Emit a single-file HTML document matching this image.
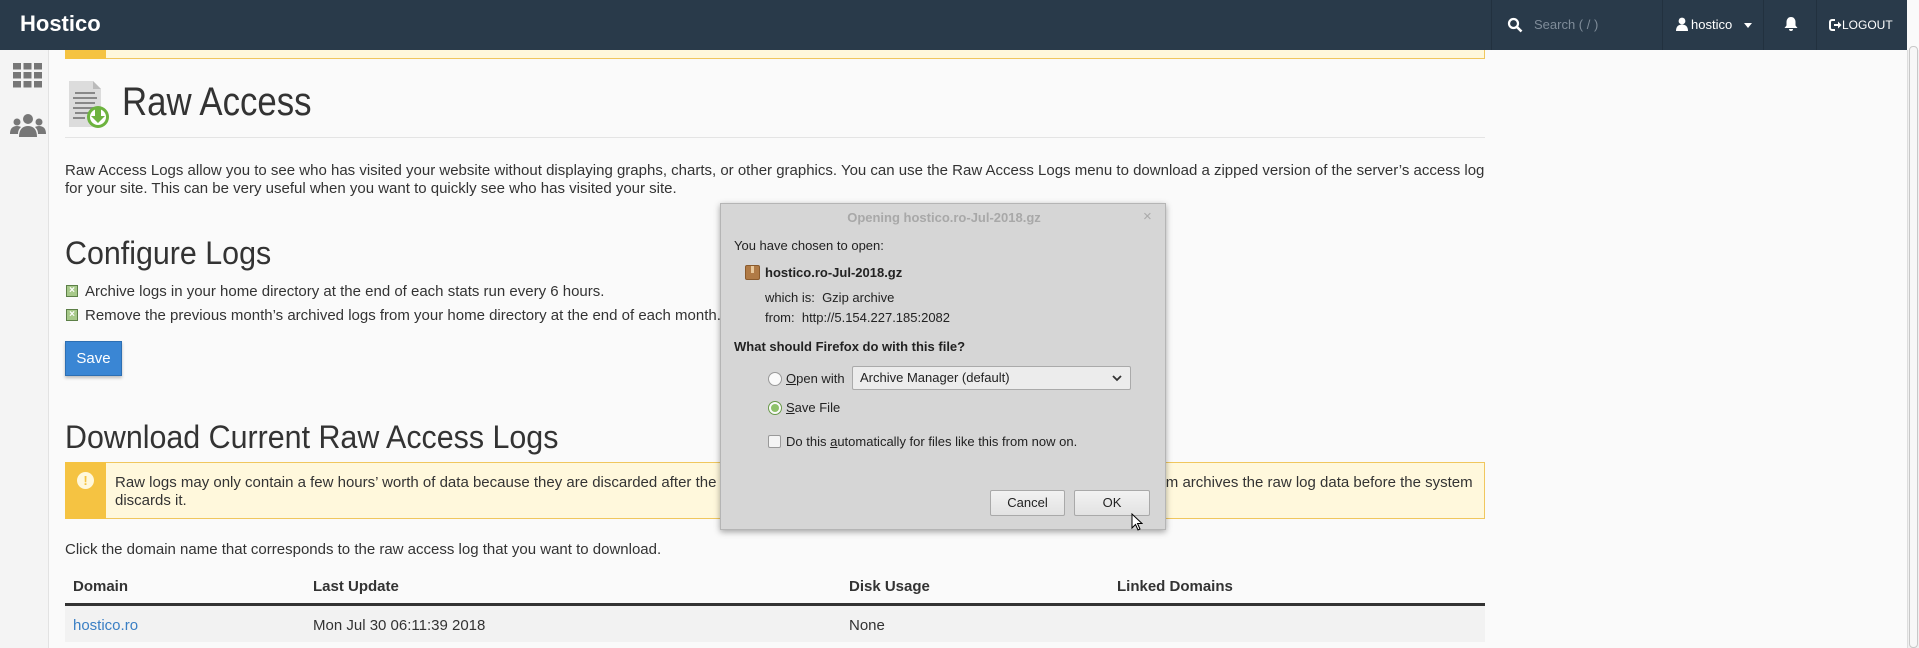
<!DOCTYPE html>
<html><head><meta charset="utf-8"><style>
*{margin:0;padding:0;box-sizing:border-box}
body{width:1919px;height:648px;overflow:hidden;background:#fafafa;font-family:"Liberation Sans",sans-serif;color:#333;position:relative}
.a{position:absolute;white-space:nowrap}
.hdr{left:0;top:0;width:1907px;height:50px;background:#293a4a}
.sep{top:0;width:1px;height:50px;background:#22313f}
.side{left:0;top:50px;width:49px;height:598px;background:#f4f4f4;border-right:1px solid #e2e2e2}
.t15{font-size:15px;color:#333}
.sx{transform-origin:0 0}
.dlg{left:720px;top:203px;width:446px;height:327px;background:#d6d6d6;border:1px solid #b5b5b5;box-shadow:0 2px 6px rgba(0,0,0,.35);font-size:13px;color:#222}
.dlg .a{position:absolute}
.btn{background:linear-gradient(#f2f2f2,#e2e2e2);border:1px solid #a9a9a9;border-radius:2px;text-align:center;line-height:24px}
.cb{width:12px;height:12px;background:#a7c98a;border:1px solid #5c7f47;color:#fff;font-size:10px;line-height:10px;text-align:center;font-weight:bold}
</style></head><body>
<div class="a hdr"></div>
<div class="a" style="left:20px;top:11px;font-size:22px;font-weight:bold;color:#fff">Hostico</div>
<div class="a sep" style="left:1491px"></div><div class="a sep" style="left:1662px"></div><div class="a sep" style="left:1763px"></div><div class="a sep" style="left:1816px"></div>
<svg class="a" style="left:1507px;top:17px" width="16" height="16" viewBox="0 0 16 16"><circle cx="6.5" cy="6.5" r="4.5" fill="none" stroke="#fff" stroke-width="2.2"/><path d="M10 10l4.5 4.5" stroke="#fff" stroke-width="2.6"/></svg>
<div class="a" style="left:1534px;top:17px;font-size:13px;color:#7f8c99">Search ( / )</div>
<svg class="a" style="left:1676px;top:17px" width="12" height="14" viewBox="0 0 12 14"><circle cx="6" cy="4" r="3.4" fill="#fff"/><path d="M0 14c0-5 3-6.5 6-6.5s6 1.5 6 6.5z" fill="#fff"/></svg>
<div class="a" style="left:1691px;top:17px;font-size:13px;color:#fff">hostico</div>
<div class="a" style="left:1744px;top:23px;border:4px solid transparent;border-top:5px solid #fff"></div>
<svg class="a" style="left:1784px;top:16px" width="14" height="16" viewBox="0 0 14 16"><path d="M7 1c3 0 4.5 2.5 4.5 5v3.5L13.5 12H.5l2-2.5V6C2.5 3.5 4 1 7 1z M5 13h4a2 2 0 0 1-4 0z" fill="#fff"/></svg>
<svg class="a" style="left:1829px;top:19px" width="13" height="12" viewBox="0 0 13 12"><path d="M6 1H3a2 2 0 0 0-2 2v6a2 2 0 0 0 2 2h3" fill="none" stroke="#fff" stroke-width="2"/><path d="M5 5h4V2.5L12.5 6 9 9.5V7H5z" fill="#fff"/></svg>
<div class="a" style="left:1842px;top:18px;font-size:12px;color:#fff">LOGOUT</div>
<div class="a" style="left:1907px;top:50px;width:12px;height:598px;background:#f0f0f0;border-left:1px solid #ddd"></div>
<div class="a" style="left:1909px;top:46px;width:9px;height:602px;border:1px solid #c8c8c8;border-radius:4px;background:#f7f7f7"></div>
<div class="a side"></div>
<svg class="a" style="left:13px;top:63px" width="30" height="25" viewBox="0 0 30 25"><g fill="#777"><rect x="0" y="0" width="8" height="6.5"/><rect x="10.5" y="0" width="8" height="6.5"/><rect x="21" y="0" width="8" height="6.5"/><rect x="0" y="9" width="8" height="6.5"/><rect x="10.5" y="9" width="8" height="6.5"/><rect x="21" y="9" width="8" height="6.5"/><rect x="0" y="18" width="8" height="6.5"/><rect x="10.5" y="18" width="8" height="6.5"/><rect x="21" y="18" width="8" height="6.5"/></g></svg>
<svg class="a" style="left:10px;top:113px" width="36" height="24" viewBox="0 0 36 24"><g fill="#777"><circle cx="18" cy="6" r="5"/><path d="M9 24c0-8 4-11 9-11s9 3 9 11z"/><circle cx="7" cy="9" r="3.5"/><path d="M0 21c0-6 3-8 7-8 2 0 3 .5 4 1-2 2-3 4-3 7z"/><circle cx="29" cy="9" r="3.5"/><path d="M36 21c0-6-3-8-7-8-2 0-3 .5-4 1 2 2 3 4 3 7z"/></g></svg>
<div class="a" style="left:65px;top:50px;width:1420px;height:9px;background:#fff8dc;border:1px solid #f0c75e;border-top:none"></div>
<div class="a" style="left:65px;top:50px;width:41px;height:9px;background:#f5c342"></div>
<svg class="a" style="left:67px;top:81px" width="44" height="48" viewBox="0 0 44 48"><path d="M2 0h24l8 8v38H2z" fill="#dcdcdc"/><path d="M26 0v8h8z" fill="#bbb"/><g stroke="#888" stroke-width="2"><path d="M8 12h20M6 17h24M8 22h20M6 27h22M8 32h14M6 37h12"/></g><circle cx="31" cy="36" r="11" fill="#6db33f"/><circle cx="31" cy="36" r="8" fill="#fff"/><path d="M28 28h6v7h4l-7 7-7-7h4z" fill="#6db33f"/></svg>
<div class="a sx" style="left:122px;top:80px;font-size:40px;color:#333;transform:scaleX(0.87)">Raw Access</div>
<div class="a" style="left:65px;top:137px;width:1420px;height:1px;background:#e4e4e4"></div>
<div class="a t15" style="left:65px;top:162px">Raw Access Logs allow you to see who has visited your website without displaying graphs, charts, or other graphics. You can use the Raw Access Logs menu to download a zipped version of the server’s access log</div>
<div class="a t15" style="left:65px;top:180px">for your site. This can be very useful when you want to quickly see who has visited your site.</div>
<div class="a sx" style="left:65px;top:235px;font-size:32px;transform:scaleX(0.95)">Configure Logs</div>
<div class="a cb" style="left:66px;top:285px">×</div>
<div class="a t15" style="left:85px;top:283px">Archive logs in your home directory at the end of each stats run every 6 hours.</div>
<div class="a cb" style="left:66px;top:309px">×</div>
<div class="a t15" style="left:85px;top:307px">Remove the previous month’s archived logs from your home directory at the end of each month.</div>
<div class="a" style="left:65px;top:341px;width:57px;height:35px;background:#3a86d4;border:1px solid #2d6fb3;box-shadow:0 2px 3px rgba(0,0,0,.25);color:#fff;font-size:15px;text-align:center;line-height:33px">Save</div>
<div class="a sx" style="left:65px;top:419px;font-size:32px;transform:scaleX(0.95)">Download Current Raw Access Logs</div>
<div class="a" style="left:65px;top:462px;width:1420px;height:57px;background:#fff8dc;border:1px solid #f0c75e"></div>
<div class="a" style="left:65px;top:462px;width:41px;height:57px;background:#f5c342"></div>
<div class="a" style="left:77px;top:472px;width:17px;height:17px;border-radius:50%;background:#fff8dc;color:#f5c342;font-weight:bold;font-size:13px;text-align:center;line-height:17px">!</div>
<div class="a t15" style="left:115px;top:474px">Raw logs may only contain a few hours’ worth of data because they are discarded after the system processes them. However, if archiving is enabled, the system archives the raw log data before the system</div>
<div class="a t15" style="left:115px;top:492px">discards it.</div>
<div class="a t15" style="left:65px;top:541px">Click the domain name that corresponds to the raw access log that you want to download.</div>
<div class="a t15" style="left:73px;top:578px;font-weight:bold">Domain</div>
<div class="a t15" style="left:313px;top:578px;font-weight:bold">Last Update</div>
<div class="a t15" style="left:849px;top:578px;font-weight:bold">Disk Usage</div>
<div class="a t15" style="left:1117px;top:578px;font-weight:bold">Linked Domains</div>
<div class="a" style="left:65px;top:603px;width:1420px;height:3px;background:#333"></div>
<div class="a" style="left:65px;top:606px;width:1420px;height:36px;background:#f2f2f2"></div>
<div class="a t15" style="left:73px;top:617px;color:#3a7fc4">hostico.ro</div>
<div class="a t15" style="left:313px;top:617px">Mon Jul 30 06:11:39 2018</div>
<div class="a t15" style="left:849px;top:617px">None</div>
<div class="a dlg">
<div class="a" style="left:0;top:6px;width:446px;text-align:center;font-weight:bold;color:#a8a8a8">Opening hostico.ro-Jul-2018.gz</div>
<div class="a" style="left:422px;top:4px;color:#aaa;font-size:15px">×</div>
<div class="a" style="left:13px;top:34px">You have chosen to open:</div>
<div class="a" style="left:24px;top:61px;width:15px;height:15px;background:#b07a45;border-radius:2px;border:1px solid #8a5a2c"><div style="margin:0 auto;width:3px;height:7px;background:#e8c79a"></div></div>
<div class="a" style="left:44px;top:61px;font-weight:bold">hostico.ro-Jul-2018.gz</div>
<div class="a" style="left:44px;top:86px">which is:&nbsp; Gzip archive</div>
<div class="a" style="left:44px;top:106px">from:&nbsp; http://5.154.227.185:2082</div>
<div class="a" style="left:13px;top:135px;font-weight:bold">What should Firefox do with this file?</div>
<div class="a" style="left:47px;top:168px;width:14px;height:14px;border-radius:50%;background:#fafafa;border:1px solid #999"></div>
<div class="a" style="left:65px;top:167px"><u>O</u>pen with</div>
<div class="a" style="left:131px;top:162px;width:279px;height:24px;background:#ececec;border:1px solid #aaa;border-radius:2px;padding-left:7px;line-height:22px">Archive Manager (default)<svg style="position:absolute;right:8px;top:8px" width="10" height="7" viewBox="0 0 10 7"><path d="M1 1l4 4 4-4" fill="none" stroke="#333" stroke-width="1.8"/></svg></div>
<div class="a" style="left:47px;top:197px;width:14px;height:14px;border-radius:50%;background:#fafafa;border:1px solid #6a9a4a"><div style="margin:2px;width:8px;height:8px;border-radius:50%;background:#8ec26a"></div></div>
<div class="a" style="left:65px;top:196px"><u>S</u>ave File</div>
<div class="a" style="left:47px;top:231px;width:13px;height:13px;background:#f4f4f4;border:1px solid #999;border-radius:2px"></div>
<div class="a" style="left:65px;top:230px">Do this <u>a</u>utomatically for files like this from now on.</div>
<div class="a btn" style="left:269px;top:286px;width:75px;height:26px">Cancel</div>
<div class="a btn" style="left:353px;top:286px;width:76px;height:26px">OK</div>
<svg class="a" style="left:410px;top:309px" width="12" height="18" viewBox="0 0 12 18"><path d="M1 1v14l3.5-3.5 2.5 5.5 2-1-2.5-5.5H11z" fill="#fff" stroke="#000" stroke-width="1"/></svg>
</div>
</body></html>
